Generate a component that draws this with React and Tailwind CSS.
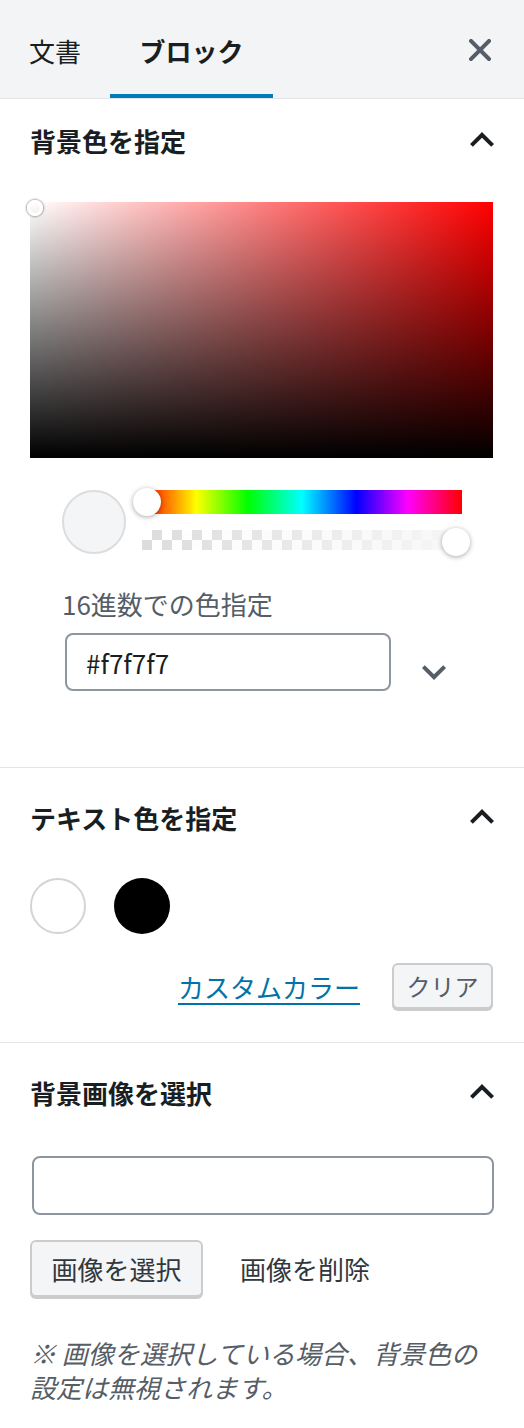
import React from "react";

function ChevronUp() {
  return (
    <svg width="48" height="48" viewBox="0 0 24 24" className="shrink-0">
      <path d="M12 8l-6 6 1.41 1.41L12 10.83l4.59 4.58L18 14z" fill="#191e23" />
    </svg>
  );
}

function SectionHead({ title }) {
  return (
    <div className="flex h-[98px] items-center justify-between">
      <span className="text-[26px] font-bold text-[#191e23]">{title}</span>
      <div className="-mr-[12px]">
        <ChevronUp />
      </div>
    </div>
  );
}

export default function App() {
  return (
    <div className="min-h-screen w-[524px] bg-white font-['Noto_Sans_CJK_JP','Noto_Sans',sans-serif]">
      {/* タブ */}
      <div className="flex h-[99px] items-stretch border-b border-[#e2e4e7] bg-[#f3f4f5]">
        <button className="flex w-[110px] items-center border-b-[4px] border-transparent pl-[29px] pt-[6px] text-[26px] text-[#191e23]">
          文書
        </button>
        <button className="flex w-[163px] items-center justify-center border-b-[4px] border-[#007cba] pt-[6px] text-[26px] font-bold text-[#191e23]">
          ブロック
        </button>
        <div className="flex flex-1 items-center justify-end pr-[33px] pt-[1px]">
          <svg width="22" height="22" viewBox="0 0 22 22">
            <path d="M2 2L20 20M20 2L2 20" stroke="#555d66" strokeWidth="4" strokeLinecap="square" />
          </svg>
        </div>
      </div>

      {/* 背景色 */}
      <div className="border-b border-[#e2e4e7] px-[30px] pb-[71px]">
        <div className="flex h-[82px] items-center justify-between">
          <span className="text-[26px] font-bold text-[#191e23]">背景色を指定</span>
          <div className="-mr-[12px]">
            <ChevronUp />
          </div>
        </div>

        <div className="relative mt-[21px] h-[256px] w-[463px] bg-[linear-gradient(to_right,#fff,#f00)]">
          <div className="h-full w-full bg-[linear-gradient(to_top,#000,rgba(0,0,0,0))]" />
          <div className="absolute -left-[3px] -top-[2px] h-[16px] w-[16px] rounded-full border-[3px] border-white shadow-[0_0_2px_1px_rgba(0,0,0,0.35)]" />
        </div>

        <div className="mt-[32px] flex items-start gap-[16px] pl-[32px]">
          <div className="h-[64px] w-[64px] rounded-full border-2 border-[#dddddd] bg-[#f4f5f6]" />
          <div className="flex w-[320px] flex-col gap-[16px]">
            <div className="relative h-[24px] w-full bg-[linear-gradient(to_right,#f00_0%,#ff0_17%,#0f0_33%,#0ff_50%,#00f_67%,#f0f_83%,#f00_100%)]">
              <div className="absolute -left-[9px] -top-[2px] h-[28px] w-[28px] rounded-full bg-white shadow-[0_1px_5px_rgba(0,0,0,0.35)]" />
            </div>
            <div className="relative h-[20px] w-full bg-[conic-gradient(#dcdcdc_25%,#fff_0_50%,#dcdcdc_0_75%,#fff_0)] bg-[length:20px_20px]">
              <div className="h-full w-full bg-[linear-gradient(to_right,rgba(247,247,247,0),#f7f7f7)]" />
              <div className="absolute left-[300px] -top-[2px] h-[28px] w-[28px] rounded-full bg-white shadow-[0_1px_5px_rgba(0,0,0,0.35)]" />
            </div>
          </div>
        </div>

        <div className="ml-[32px] mt-[30px] text-[26px] leading-[40px] text-[#555d66]">16進数での色指定</div>
        <div className="mt-[9px] flex items-start">
          <div className="ml-[35px] flex h-[58px] w-[326px] items-center rounded-[8px] border-2 border-[#8d96a0] px-[19px] text-[26px] text-[#191e23]">
            #f7f7f7
          </div>
          <svg width="48" height="48" viewBox="0 0 24 24" className="ml-[19px] mt-[15px]">
            <path d="M16.59 8.59L12 13.17 7.41 8.59 6 10l6 6 6-6z" fill="#555d66" />
          </svg>
        </div>
      </div>

      {/* テキスト色 */}
      <div className="border-b border-[#e2e4e7] px-[30px] pb-[33px]">
        <SectionHead title="テキスト色を指定" />
        <div className="mt-[12px] flex gap-[28px]">
          <div className="h-[56px] w-[56px] rounded-full border-2 border-[#d4d4d4] bg-white" />
          <div className="h-[56px] w-[56px] rounded-full bg-black" />
        </div>
        <div className="mt-[29px] flex items-center justify-end gap-[32px] pr-[1px]">
          <span className="text-[26px] text-[#0073aa] underline decoration-2 underline-offset-[5px]">カスタムカラー</span>
          <button className="flex h-[46px] w-[101px] items-center justify-center rounded-[6px] border-2 border-[#cccccc] bg-[#f3f5f6] text-[24px] text-[#555d66] shadow-[0_2px_0_#cccccc]">
            クリア
          </button>
        </div>
      </div>

      {/* 背景画像 */}
      <div className="px-[30px] pb-[40px]">
        <SectionHead title="背景画像を選択" />
        <div className="ml-[2px] mt-[15px] h-[59px] w-[462px] rounded-[8px] border-2 border-[#8d96a0]" />
        <div className="mt-[25px] flex items-center gap-[37px]">
          <button className="flex h-[57px] w-[173px] items-center justify-center rounded-[6px] border-2 border-[#cccccc] bg-[#f3f5f6] text-[26px] text-[#32373c] shadow-[0_2px_0_#cccccc]">
            画像を選択
          </button>
          <span className="text-[26px] text-[#32373c]">画像を削除</span>
        </div>
        <p className="mt-[39px] text-[26px] italic leading-[34px] text-[#555d66]">
          ※ 画像を選択している場合、背景色の設定は無視されます。
        </p>
      </div>
    </div>
  );
}
